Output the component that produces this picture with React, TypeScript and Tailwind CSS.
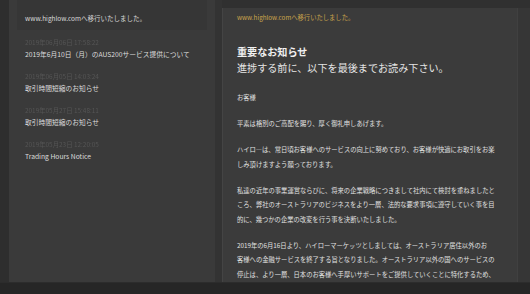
import React from 'react';

const font = { fontFamily: '"Noto Sans CJK JP", "Noto Sans", sans-serif' };

const items = [
  { date: '2019年06月06日 17:58:22', title: '2019年6月10日（月）のAUS200サービス提供について' },
  { date: '2019年06月05日 14:03:24', title: '取引時間短縮のお知らせ' },
  { date: '2019年05月27日 15:48:11', title: '取引時間短縮のお知らせ' },
  { date: '2019年05月23日 12:20:05', title: 'Trading Hours Notice' },
];

const body = [
  ['お客様'],
  ['平素は格別のご高配を賜り、厚く御礼申しあげます。'],
  ['ハイロ―は、常日頃お客様へのサービスの向上に努めており、お客様が快適にお取引をお楽', 'しみ頂けますよう願っております。'],
  [
    '私達の近年の事業運営ならびに、将来の企業戦略につきまして社内にて検討を重ねましたと',
    'ころ、弊社のオーストラリアのビジネスをより一層、法的な要求事項に遵守していく事を目',
    '的に、幾つかの企業の改変を行う事を決断いたしました。',
  ],
  [
    '2019年の6月16日より、ハイローマーケッツとしましては、オーストラリア居住以外のお',
    '客様への金融サービスを終了する旨となりました。オーストラリア以外の国へのサービスの',
    '停止は、より一層、日本のお客様へ手厚いサポートをご提供していくことに特化するため、',
  ],
];

export default function App() {
  return (
    <div className="w-[530px] h-[294px] bg-[#303030] flex flex-col overflow-hidden" style={font}>
      <div className="flex h-[282px]">
        <div className="w-[9px] bg-[#2e2e2e]" />
        {/* news list */}
        <div className="w-[206px] bg-[#3a3a3a] flex flex-col">
          <div className="bg-[#363636] h-[30px] mx-[8px] pl-[8px] pt-[14px] text-[6.5px] leading-[9px] text-[#d8d8d8]">
            www.highlow.comへ移行いたしました。
          </div>
          <div className="px-[16px] pt-[8px] flex flex-col gap-[13px]">
            {items.map((it, i) => (
              <div key={i} className="flex flex-col gap-[3px]">
                <div className="text-[6.4px] leading-[9px] text-[#555555] blur-[0.6px]">{it.date}</div>
                <div className="text-[6.75px] leading-[9px] text-[#dcdcdc]">{it.title}</div>
              </div>
            ))}
          </div>
        </div>
        <div className="w-[7px] bg-[#333333]" />
        {/* detail */}
        <div className="mt-[8px] w-[295px] bg-[#3b3b3b] border-l border-[#444444] pl-[14px] pr-[10px] overflow-hidden">
          <div className="text-[6.3px] leading-[9px] text-[#c9a44c] pt-[5px]">www.highlow.comへ移行いたしました。</div>
          <div className="mt-[23px] text-[10.1px] leading-[14px] font-bold text-[#f0f0f0]">重要なお知らせ</div>
          <div className="mt-[2px] text-[10.1px] leading-[14px] text-[#e6e6e6]">進捗する前に、以下を最後までお読み下さい。</div>
          <div className="mt-[16px] flex flex-col gap-[11.5px]">
            {body.map((p, i) => (
              <div key={i} className="text-[6.3px] leading-[14.5px] text-[#e0e0e0] whitespace-nowrap">
                {p.map((l, j) => (
                  <div key={j}>{l}</div>
                ))}
              </div>
            ))}
          </div>
        </div>
        <div className="mt-[8px] flex-1 bg-[#363636] border-l border-[#404040]" />
      </div>
      <div className="h-[12px] bg-[#262626] border-t border-[#2c2c2c]" />
    </div>
  );
}
